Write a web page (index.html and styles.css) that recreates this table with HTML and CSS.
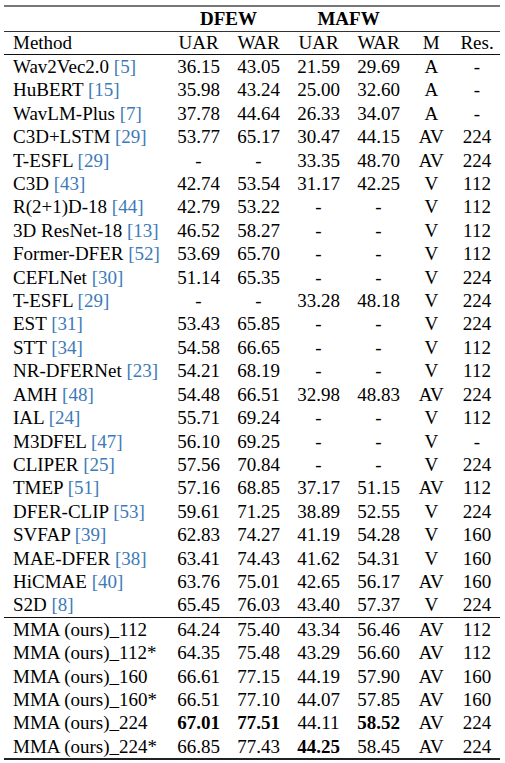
FILE: index.html
```html
<!DOCTYPE html>
<html lang="en">
<head>
    <meta charset="UTF-8">
    <meta name="viewport" content="width=device-width, initial-scale=1.0">
    <title>DFEW / MAFW results</title>
    <link rel="stylesheet" href="styles.css">
</head>
<body>
    <table class="results">
        <colgroup>
            <col class="col-method">
            <col class="col-num">
            <col class="col-num">
            <col class="col-num">
            <col class="col-num">
            <col class="col-m">
            <col class="col-res">
        </colgroup>
        <thead>
            <tr class="group-row">
                <th></th>
                <th colspan="2" class="group">DFEW</th>
                <th colspan="2" class="group">MAFW</th>
                <th></th>
                <th></th>
            </tr>
            <tr class="head-row">
                <th class="method">Method</th>
                <th>UAR</th>
                <th>WAR</th>
                <th>UAR</th>
                <th>WAR</th>
                <th>M</th>
                <th>Res.</th>
            </tr>
        </thead>
        <tbody>
            <tr><td class="method">Wav2Vec2.0 <span class="cite">[5]</span></td><td>36.15</td><td>43.05</td><td>21.59</td><td>29.69</td><td>A</td><td>-</td></tr>
            <tr><td class="method">HuBERT <span class="cite">[15]</span></td><td>35.98</td><td>43.24</td><td>25.00</td><td>32.60</td><td>A</td><td>-</td></tr>
            <tr><td class="method">WavLM-Plus <span class="cite">[7]</span></td><td>37.78</td><td>44.64</td><td>26.33</td><td>34.07</td><td>A</td><td>-</td></tr>
            <tr><td class="method">C3D+LSTM <span class="cite">[29]</span></td><td>53.77</td><td>65.17</td><td>30.47</td><td>44.15</td><td>AV</td><td>224</td></tr>
            <tr><td class="method">T-ESFL <span class="cite">[29]</span></td><td>-</td><td>-</td><td>33.35</td><td>48.70</td><td>AV</td><td>224</td></tr>
            <tr><td class="method">C3D <span class="cite">[43]</span></td><td>42.74</td><td>53.54</td><td>31.17</td><td>42.25</td><td>V</td><td>112</td></tr>
            <tr><td class="method">R(2+1)D-18 <span class="cite">[44]</span></td><td>42.79</td><td>53.22</td><td>-</td><td>-</td><td>V</td><td>112</td></tr>
            <tr><td class="method">3D ResNet-18 <span class="cite">[13]</span></td><td>46.52</td><td>58.27</td><td>-</td><td>-</td><td>V</td><td>112</td></tr>
            <tr><td class="method">Former-DFER <span class="cite">[52]</span></td><td>53.69</td><td>65.70</td><td>-</td><td>-</td><td>V</td><td>112</td></tr>
            <tr><td class="method">CEFLNet <span class="cite">[30]</span></td><td>51.14</td><td>65.35</td><td>-</td><td>-</td><td>V</td><td>224</td></tr>
            <tr><td class="method">T-ESFL <span class="cite">[29]</span></td><td>-</td><td>-</td><td>33.28</td><td>48.18</td><td>V</td><td>224</td></tr>
            <tr><td class="method">EST <span class="cite">[31]</span></td><td>53.43</td><td>65.85</td><td>-</td><td>-</td><td>V</td><td>224</td></tr>
            <tr><td class="method">STT <span class="cite">[34]</span></td><td>54.58</td><td>66.65</td><td>-</td><td>-</td><td>V</td><td>112</td></tr>
            <tr><td class="method">NR-DFERNet <span class="cite">[23]</span></td><td>54.21</td><td>68.19</td><td>-</td><td>-</td><td>V</td><td>112</td></tr>
            <tr><td class="method">AMH <span class="cite">[48]</span></td><td>54.48</td><td>66.51</td><td>32.98</td><td>48.83</td><td>AV</td><td>224</td></tr>
            <tr><td class="method">IAL <span class="cite">[24]</span></td><td>55.71</td><td>69.24</td><td>-</td><td>-</td><td>V</td><td>112</td></tr>
            <tr><td class="method">M3DFEL <span class="cite">[47]</span></td><td>56.10</td><td>69.25</td><td>-</td><td>-</td><td>V</td><td>-</td></tr>
            <tr><td class="method">CLIPER <span class="cite">[25]</span></td><td>57.56</td><td>70.84</td><td>-</td><td>-</td><td>V</td><td>224</td></tr>
            <tr><td class="method">TMEP <span class="cite">[51]</span></td><td>57.16</td><td>68.85</td><td>37.17</td><td>51.15</td><td>AV</td><td>112</td></tr>
            <tr><td class="method">DFER-CLIP <span class="cite">[53]</span></td><td>59.61</td><td>71.25</td><td>38.89</td><td>52.55</td><td>V</td><td>224</td></tr>
            <tr><td class="method">SVFAP <span class="cite">[39]</span></td><td>62.83</td><td>74.27</td><td>41.19</td><td>54.28</td><td>V</td><td>160</td></tr>
            <tr><td class="method">MAE-DFER <span class="cite">[38]</span></td><td>63.41</td><td>74.43</td><td>41.62</td><td>54.31</td><td>V</td><td>160</td></tr>
            <tr><td class="method">HiCMAE <span class="cite">[40]</span></td><td>63.76</td><td>75.01</td><td>42.65</td><td>56.17</td><td>AV</td><td>160</td></tr>
            <tr><td class="method">S2D <span class="cite">[8]</span></td><td>65.45</td><td>76.03</td><td>43.40</td><td>57.37</td><td>V</td><td>224</td></tr>
        </tbody>
        <tbody class="ours">
            <tr><td class="method">MMA (ours)_112</td><td>64.24</td><td>75.40</td><td>43.34</td><td>56.46</td><td>AV</td><td>112</td></tr>
            <tr><td class="method">MMA (ours)_112*</td><td>64.35</td><td>75.48</td><td>43.29</td><td>56.60</td><td>AV</td><td>112</td></tr>
            <tr><td class="method">MMA (ours)_160</td><td>66.61</td><td>77.15</td><td>44.19</td><td>57.90</td><td>AV</td><td>160</td></tr>
            <tr><td class="method">MMA (ours)_160*</td><td>66.51</td><td>77.10</td><td>44.07</td><td>57.85</td><td>AV</td><td>160</td></tr>
            <tr><td class="method">MMA (ours)_224</td><td class="best">67.01</td><td class="best">77.51</td><td>44.11</td><td class="best">58.52</td><td>AV</td><td>224</td></tr>
            <tr><td class="method">MMA (ours)_224*</td><td>66.85</td><td>77.43</td><td class="best">44.25</td><td>58.45</td><td>AV</td><td>224</td></tr>
        </tbody>
    </table>
</body>
</html>
```

FILE: styles.css
```css
* {
    margin: 0;
    padding: 0;
    box-sizing: border-box;
}

body {
    background: #fff;
    color: #000;
    font-family: "Liberation Serif", "Times New Roman", serif;
    font-size: 19px;
    padding: 5px 5px 0 4px;
}

.results {
    width: 496px;
    border-collapse: collapse;
    table-layout: fixed;
    border-top: 2px solid #777;
    border-bottom: 2px solid #222;
}

.col-method { width: 164.5px; }
.col-num { width: 60px; }
.col-m { width: 45.5px; }
.col-res { width: 46px; }

th,
td {
    font-weight: normal;
    text-align: center;
    white-space: nowrap;
    height: 23.4px;
    line-height: 23.4px;
}

.group-row th {
    height: 24px;
    line-height: 24px;
    border-bottom: 1px solid #333;
}

.group-row .group {
    font-weight: bold;
}

.head-row th {
    height: 22px;
    line-height: 22px;
    border-bottom: 1px solid #111;
}

.method {
    text-align: left;
    padding-left: 9px;
}

.cite {
    color: #3d7ab8;
}

.ours {
    border-top: 1px solid #111;
}

.best {
    font-weight: bold;
}
```
